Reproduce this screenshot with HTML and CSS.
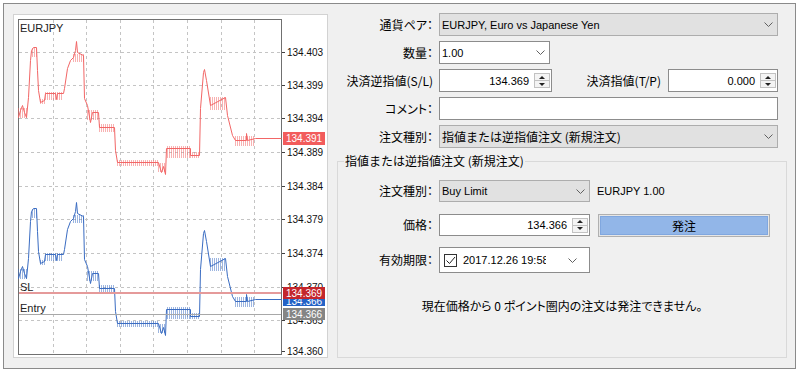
FILE: index.html
```html
<!doctype html>
<html>
<head>
    <title>新規注文</title>
    <meta charset="utf-8">
    <link rel="stylesheet" href="styles.css">
</head>
<body>
<div class="window">
    <!-- チャート -->
    <div class="chart-panel">
        <svg class="chart" width="313" height="342" viewBox="14 15 313 342">
            <defs>
                <g id="trace">
                    <path class="line" transform="translate(.5 .5)" d="M18,117 L20,110 L22,105 L24,112 L26,117 L28,97 L30,60 L31,50 L33,47 L36,47 L37,70 L38,90 L40,102 L44,100 L45,93 L55,93 L56,99 L57,93 L63,93 L64,88 L67,68 L70,60 L73,57 L75,50 L76,41 L77,52 L83,55 L84,98 L87,105 L90,122 L92,112 L98,112 L99,127 L114,127 L115,150 L117,162 L158,162 L161,172 L163,166 L165,174 L166,148 L190,148 L190,155 L199,155 L200,108 L203,72 L204,69 L206,80 L210,105 L225,97 L227,115 L232,135 L235,140 L246,140 L246,133 L247,140 L255,138 L281,138"/>
                    <g class="hatch">
                        <line x1="18" x2="27" y1="113" y2="113" stroke-width="10"/>
                        <line x1="32" x2="37" y1="52.5" y2="52.5" stroke-width="9"/>
                        <line x1="40" x2="45" y1="101.5" y2="101.5" stroke-width="5"/>
                        <line x1="45" x2="63" y1="96" y2="96" stroke-width="8"/>
                        <line x1="73" x2="84" y1="58" y2="58" stroke-width="8"/>
                        <line x1="87" x2="98" y1="115" y2="115" stroke-width="10"/>
                        <line x1="99" x2="115" y1="128" y2="128" stroke-width="8"/>
                        <line x1="117" x2="158" y1="163" y2="163" stroke-width="6"/>
                        <line x1="158" x2="166" y1="167.5" y2="167.5" stroke-width="9"/>
                        <line x1="167" x2="190" y1="152" y2="152" stroke-width="12"/>
                        <line x1="190" x2="200" y1="155" y2="155" stroke-width="6"/>
                        <line x1="210" x2="226" y1="103.5" y2="103.5" stroke-width="13"/>
                        <line x1="235" x2="255" y1="141" y2="141" stroke-width="10"/>
                    </g>
                </g>
            </defs>

            <g class="grid">
                <line x1="53.5" x2="53.5" y1="20" y2="354"/>
                <line x1="86.5" x2="86.5" y1="20" y2="354"/>
                <line x1="120.5" x2="120.5" y1="20" y2="354"/>
                <line x1="153.5" x2="153.5" y1="20" y2="354"/>
                <line x1="187.5" x2="187.5" y1="20" y2="354"/>
                <line x1="221.5" x2="221.5" y1="20" y2="354"/>
                <line x1="254.5" x2="254.5" y1="20" y2="354"/>
                <line x1="19" x2="281" y1="52.5" y2="52.5"/>
                <line x1="19" x2="281" y1="85.5" y2="85.5"/>
                <line x1="19" x2="281" y1="118.5" y2="118.5"/>
                <line x1="19" x2="281" y1="152.5" y2="152.5"/>
                <line x1="19" x2="281" y1="186.5" y2="186.5"/>
                <line x1="19" x2="281" y1="219.5" y2="219.5"/>
                <line x1="19" x2="281" y1="253.5" y2="253.5"/>
                <line x1="19" x2="281" y1="287.5" y2="287.5"/>
                <line x1="19" x2="281" y1="320.5" y2="320.5"/>
            </g>

            <rect class="plot" x="18.5" y="19.5" width="263" height="335"/>

            <g class="ticks">
                <line x1="282" x2="285" y1="52.5" y2="52.5"/>
                <line x1="282" x2="285" y1="85.5" y2="85.5"/>
                <line x1="282" x2="285" y1="118.5" y2="118.5"/>
                <line x1="282" x2="285" y1="152.5" y2="152.5"/>
                <line x1="282" x2="285" y1="186.5" y2="186.5"/>
                <line x1="282" x2="285" y1="219.5" y2="219.5"/>
                <line x1="282" x2="285" y1="253.5" y2="253.5"/>
                <line x1="282" x2="285" y1="287.5" y2="287.5"/>
                <line x1="282" x2="285" y1="320.5" y2="320.5"/>
                <line x1="282" x2="285" y1="351.5" y2="351.5"/>
            </g>

            <g class="axis">
                <text x="287" y="56">134.403</text>
                <text x="287" y="89">134.399</text>
                <text x="287" y="122">134.394</text>
                <text x="287" y="156">134.389</text>
                <text x="287" y="190">134.384</text>
                <text x="287" y="223">134.379</text>
                <text x="287" y="257">134.374</text>
                <text x="287" y="291">134.370</text>
                <text x="287" y="324">134.365</text>
                <text x="287" y="355">134.360</text>
            </g>

            <use href="#trace" class="bid"/>
            <use href="#trace" class="ask" transform="translate(0 161)"/>

            <line class="sl-line" x1="19" x2="281" y1="293" y2="293"/>
            <line class="entry-line" x1="19" x2="281" y1="314.5" y2="314.5"/>

            <text class="caption" x="20" y="32">EURJPY</text>
            <text class="caption" x="20" y="291">SL</text>
            <text class="caption" x="20" y="312">Entry</text>

            <g class="tags">
                <rect class="tag-bid" x="283" y="132" width="42" height="13"/>
                <text x="286" y="142">134.391</text>
                <rect class="tag-ask" x="283" y="294" width="42" height="12"/>
                <text x="286" y="305">134.366</text>
                <rect class="tag-sl" x="283" y="287" width="42" height="12"/>
                <text x="286" y="297">134.369</text>
                <rect class="tag-entry" x="283" y="308" width="42" height="12"/>
                <text x="286" y="318">134.366</text>
            </g>
        </svg>
    </div>

    <!-- 注文フォーム -->
    <div class="order-form">
        <div class="row">
            <label class="lbl">通貨ペア：</label>
            <div class="field combo wide">
                <span class="val">EURJPY, Euro vs Japanese Yen</span>
                <svg class="chev" width="9" height="5"><polyline points="0.5,0.5 4.5,4.5 8.5,0.5"/></svg>
            </div>
        </div>
        <div class="row">
            <label class="lbl">数量：</label>
            <div class="field qty">
                <span class="val">1.00</span>
                <svg class="chev" width="9" height="5"><polyline points="0.5,0.5 4.5,4.5 8.5,0.5"/></svg>
            </div>
        </div>
        <div class="row">
            <label class="lbl">決済逆指値(S/L)</label>
            <div class="field spin sl">
                <span class="num">134.369</span>
                <span class="spinner"><b class="up"></b><b class="down"></b></span>
            </div>
            <label class="lbl tp-lbl">決済指値(T/P)</label>
            <div class="field spin tp">
                <span class="num">0.000</span>
                <span class="spinner"><b class="up"></b><b class="down"></b></span>
            </div>
        </div>
        <div class="row">
            <label class="lbl">コメント：</label>
            <div class="field wide"></div>
        </div>
        <div class="row">
            <label class="lbl">注文種別：</label>
            <div class="field combo wide">
                <span class="val jp">指値または逆指値注文 (新規注文)</span>
                <svg class="chev" width="9" height="5"><polyline points="0.5,0.5 4.5,4.5 8.5,0.5"/></svg>
            </div>
        </div>

        <fieldset class="group">
            <legend>指値または逆指値注文 (新規注文)</legend>
            <div class="group-body">
                <div class="row">
                    <label class="lbl">注文種別：</label>
                    <div class="field combo mid">
                        <span class="val">Buy Limit</span>
                        <svg class="chev" width="9" height="5"><polyline points="0.5,0.5 4.5,4.5 8.5,0.5"/></svg>
                    </div>
                    <span class="symbol">EURJPY 1.00</span>
                </div>
                <div class="row price-row">
                    <label class="lbl">価格：</label>
                    <div class="field spin mid">
                        <span class="num">134.366</span>
                        <span class="spinner"><b class="up"></b><b class="down"></b></span>
                    </div>
                    <button class="send"><span>発注</span></button>
                </div>
                <div class="row date-row">
                    <label class="lbl">有効期限：</label>
                    <div class="field mid date">
                        <span class="check">
                            <svg width="11" height="11"><polyline points="1.5,5.5 4.5,8.5 10,2"/></svg>
                        </span>
                        <span class="date-text">2017.12.26 19:58</span>
                        <svg class="chev" width="9" height="5"><polyline points="0.5,0.5 4.5,4.5 8.5,0.5"/></svg>
                    </div>
                </div>
                <p class="notice">現在価格から 0 ポイント圏内の注文は発注できません。</p>
            </div>
        </fieldset>
    </div>
</div>
</body>
</html>
```

FILE: styles.css
```css
body {
    margin: 0;
    background-color: white;
    font-family: "Noto Sans CJK JP", sans-serif;
    font-size: 12px;
    color: black;
}
.window {
    margin: 3px;
    width: 793px;
    height: 366px;
    box-sizing: border-box;
    border: 1px solid #8a8a8a;
    background-color: #f0f0f0;
    display: flex;
    align-items: flex-start;
    padding: 9px 0 0 9px;
}

/* チャート */
.chart-panel {
    width: 315px;
    height: 344px;
    margin-top: 1px;
    box-sizing: border-box;
    border: 1px solid #d2d2d2;
    background-color: white;
}
.chart {
    display: block;
}
.grid line {
    stroke: #c4c4c4;
    stroke-dasharray: 3 3;
}
.plot {
    fill: none;
    stroke: #707070;
}
.ticks line {
    stroke: #404040;
}
.axis text, .tags text, .caption {
    font-family: "Liberation Sans", sans-serif;
    font-size: 10px;
}
.axis text {
    fill: #111;
}
.caption {
    fill: #222;
    font-size: 11px;
}
.line {
    fill: none;
    stroke: currentColor;
}
.hatch line {
    stroke: currentColor;
    stroke-dasharray: 1 1;
    stroke-opacity: 0.5;
}
.bid {
    color: #f26666;
}
.ask {
    color: #3a6cc2;
}
.sl-line {
    stroke: #e59a9a;
    stroke-width: 2;
}
.entry-line {
    stroke: #a8a8a8;
}
.tags text {
    fill: white;
}
.tag-bid { fill: #f25c5c; }
.tag-ask { fill: #2462c6; }
.tag-sl { fill: #c4262c; }
.tag-entry { fill: #858585; }

/* 注文フォーム */
.order-form {
    margin-left: 9px;
    width: 450px;
}
.row {
    display: flex;
    align-items: center;
    height: 23px;
    margin-bottom: 5px;
}
.lbl {
    width: 96px;
    margin-right: 6px;
    text-align: right;
    white-space: nowrap;
    line-height: 16px;
    font-feature-settings: "palt";
}
.field {
    box-sizing: border-box;
    height: 100%;
    display: flex;
    align-items: center;
    border: 1px solid #8c8c8c;
    background-color: white;
    font-family: "Liberation Sans", sans-serif;
    font-size: 11px;
    padding-left: 2px;
}
.combo {
    background-color: #e1e1e1;
    border-color: #adadad;
}
.wide {
    width: 339px;
}
.qty {
    width: 111px;
}
.sl {
    width: 113px;
}
.tp {
    width: 110px;
}
.mid {
    width: 151px;
}
.val {
    white-space: nowrap;
}
.jp {
    font-family: "Noto Sans CJK JP", sans-serif;
    font-size: 12px;
}
.chev {
    margin-left: auto;
    margin-right: 4px;
}
.chev polyline {
    fill: none;
    stroke: #606060;
}
.num {
    flex: 1;
    text-align: right;
    padding-right: 5px;
}
.spinner {
    width: 16px;
    height: 15px;
    margin-right: 1px;
    box-sizing: border-box;
    border: 1px solid #c2c2c2;
    background-color: #f4f4f4;
    display: flex;
    flex-direction: column;
}
.spinner b {
    flex: 1;
    display: flex;
    align-items: center;
    justify-content: center;
}
.spinner .up {
    border-bottom: 1px solid #c2c2c2;
}
.spinner .up::before, .spinner .down::before {
    content: "";
    border-left: 3px solid transparent;
    border-right: 3px solid transparent;
}
.spinner .up::before {
    border-bottom: 3px solid #222;
}
.spinner .down::before {
    border-top: 3px solid #222;
}
.tp-lbl {
    width: 109px;
    margin-right: 7px;
}

/* グループボックス */
.group {
    margin: 1px 0 0 0;
    padding: 0;
    width: 450px;
    height: 205px;
    box-sizing: border-box;
    border: 1px solid #d9d9d9;
}
.group legend {
    margin-left: 6px;
    padding: 0 1px;
    line-height: 16px;
}
.group-body {
    padding-top: 11px;
}
.group .row {
    height: 22px;
    margin-bottom: 12px;
}
.group .lbl {
    width: 95px;
}
.group .price-row {
    margin-bottom: 11px;
}
.group .date-row {
    height: 26px;
}
.symbol {
    margin-left: 7px;
    font-family: "Liberation Sans", sans-serif;
    font-size: 11px;
}
.send {
    margin-left: 8px;
    width: 172px;
    height: 23px;
    padding: 1px;
    box-sizing: border-box;
    border: 1px solid #b0b0b0;
    background-color: #e6e6e6;
    font-family: "Noto Sans CJK JP", sans-serif;
    font-size: 12px;
    color: black;
}
.send span {
    display: flex;
    align-items: center;
    justify-content: center;
    height: 100%;
    box-sizing: border-box;
    border: 1px solid #80a7df;
    background-color: #92b6e8;
}
.check {
    margin-left: 2px;
    width: 13px;
    height: 13px;
    box-sizing: border-box;
    border: 1px solid #333;
    display: flex;
    align-items: center;
    justify-content: center;
}
.check polyline {
    fill: none;
    stroke: #222;
}
.date-text {
    margin-left: 6px;
    width: 83px;
    flex-shrink: 0;
    overflow: hidden;
    white-space: nowrap;
}
.date .chev {
    margin-left: 22px;
    margin-right: 0;
}
.notice {
    margin: 25px 0 0 0;
    text-align: center;
    line-height: 16px;
    font-feature-settings: "palt";
}
```
